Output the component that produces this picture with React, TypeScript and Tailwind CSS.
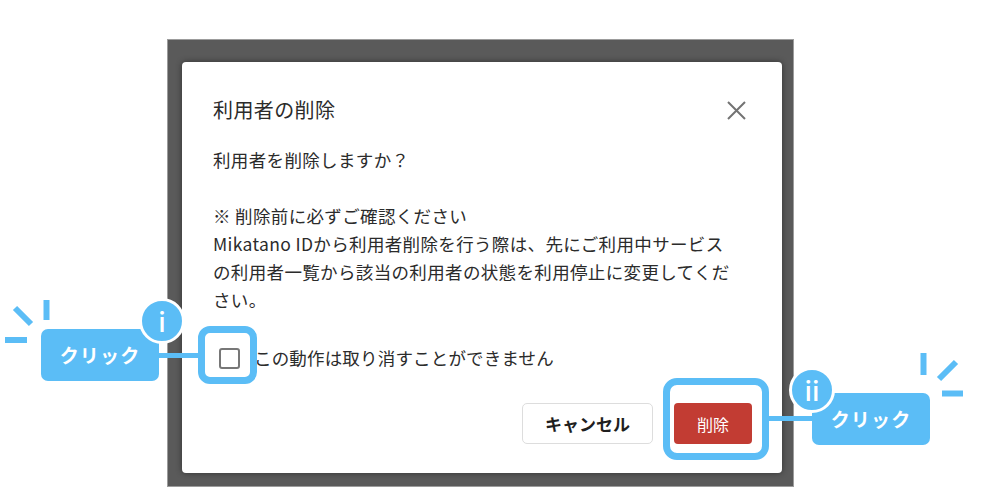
const BLUE = 'bg-[#5bbdf6]'

function Badge({ text, className }: { text: string; className: string }) {
  return (
    <div
      className={`absolute flex h-[46px] w-[46px] items-center justify-center rounded-full border-[3px] border-white bg-[#5bbdf6] text-[26px] font-medium leading-none text-white ${className}`}
    >
      {text}
    </div>
  )
}

function ClickLabel({ className }: { className: string }) {
  return (
    <div
      className={`absolute flex h-[52px] w-[118px] items-center justify-center rounded-[7px] ${BLUE} text-[19px] font-bold tracking-[0.06em] text-white ${className}`}
    >
      クリック
    </div>
  )
}

function CloseIcon() {
  return (
    <svg width="19" height="19" viewBox="0 0 19 19" className="mr-[6px]">
      <path d="M1 1L18 18M18 1L1 18" stroke="#737373" strokeWidth="2" />
    </svg>
  )
}

export default function App() {
  return (
    <div className="relative h-[492px] w-[986px] overflow-hidden bg-white pl-[167px] pt-[39px] font-['Noto_Sans_CJK_JP','Noto_Sans',sans-serif] text-[#2b2b2b]">
      {/* screenshot backdrop */}
      <div className="h-[448px] w-[627px] border border-[#9c9c9c] bg-[#5a5a5a] pl-[14px] pt-[22px]">
        <div className="flex h-[411px] w-[600px] flex-col rounded-[4px] bg-white pb-[29px] pl-[31px] pr-[30px] pt-[34px] shadow-[0_0_6px_rgba(0,0,0,0.45)]">
          <div className="flex h-[28px] items-center justify-between">
            <h2 className="text-[20px] leading-[28px] tracking-[0.02em]">利用者の削除</h2>
            <CloseIcon />
          </div>

          <div className="mt-[22px] whitespace-nowrap text-[17.5px] leading-[28px] tracking-[0.02em]">
            <p>利用者を削除しますか？</p>
            <p>&nbsp;</p>
            <p>※ 削除前に必ずご確認ください</p>
            <p>
              Mikatano IDから利用者削除を行う際は、先にご利用中サービス
              <br />
              の利用者一覧から該当の利用者の状態を利用停止に変更してくだ
              <br />
              さい。
            </p>
          </div>

          <label className="mt-[33px] flex h-[22px] items-center">
            <span className="ml-[6px] h-[21px] w-[21px] rounded-[3px] border-2 border-[#777]" />
            <span className="ml-[14px] text-[17.5px] tracking-[0.01em]">この動作は取り消すことができません</span>
          </label>

          <div className="mt-auto flex justify-end gap-[21px]">
            <button className="h-[41px] w-[131px] rounded-[5px] border border-[#dddddd] bg-white text-[17px] font-bold text-[#1f1f1f]">
              キャンセル
            </button>
            <button className="h-[41px] w-[78px] rounded-[4px] bg-[#c23c33] text-[16px] text-white">削除</button>
          </div>
        </div>
      </div>

      {/* annotations */}
      <svg className="pointer-events-none absolute left-0 top-0" width="986" height="492">
        <g stroke="#5bbdf6" strokeWidth="6">
          <line x1="46.5" y1="300" x2="46.5" y2="320" />
          <line x1="15" y1="308" x2="31" y2="324" />
          <line x1="5" y1="340" x2="27" y2="340" />
          <line x1="923.5" y1="353" x2="923.5" y2="375" />
          <line x1="939" y1="379" x2="956" y2="362" />
          <line x1="942" y1="393.5" x2="963" y2="393.5" />
        </g>
        <g stroke="#5bbdf6" strokeWidth="5">
          <line x1="156" y1="355.5" x2="200" y2="355.5" />
          <line x1="767" y1="418.5" x2="814" y2="418.5" />
        </g>
      </svg>

      <div className="absolute left-[198px] top-[326px] h-[58px] w-[59px] rounded-[12px] border-[7px] border-[#5bbdf6]" />
      <div className="absolute left-[663px] top-[378px] h-[82px] w-[106px] rounded-[14px] border-[7px] border-[#5bbdf6]" />

      <ClickLabel className="left-[41px] top-[329px]" />
      <ClickLabel className="left-[812px] top-[393px]" />

      <Badge text="i" className="left-[139px] top-[298px]" />
      <Badge text="ii" className="left-[789px] top-[367px]" />
    </div>
  )
}
